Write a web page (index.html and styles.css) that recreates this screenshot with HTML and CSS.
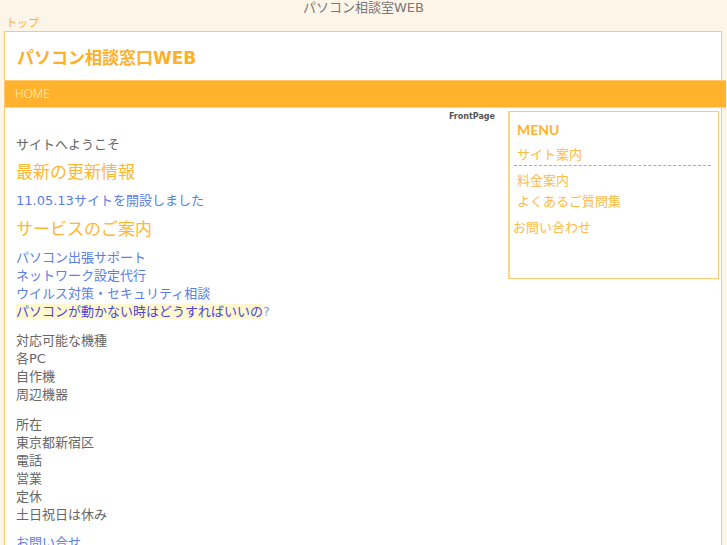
FILE: index.html
```html
<!DOCTYPE html>
<html lang="ja">
<head>
<meta charset="utf-8">
<title>パソコン相談室WEB</title>
<link rel="stylesheet" href="styles.css">
</head>
<body>
<div class="tagline">パソコン相談室WEB</div>
<div class="toplink"><a href="#">トップ</a></div>
<div class="wrap">
  <div class="header"><a href="#">パソコン相談窓口WEB</a></div>
  <div class="nav"><a href="#">HOME</a></div>
  <div class="main">
    <div class="content">
      <div class="pagename">FrontPage</div>
      <p class="text intro">サイトへようこそ</p>
      <h2 class="heading h-news">最新の更新情報</h2>
      <p class="news"><a href="#">11.05.13サイトを開設しました</a></p>
      <h2 class="heading h-service">サービスのご案内</h2>
      <ul class="links">
        <li><a href="#">パソコン出張サポート</a></li>
        <li><a href="#">ネットワーク設定代行</a></li>
        <li><a href="#">ウイルス対策・セキュリティ相談</a></li>
        <li><a href="#" class="visited">パソコンが動かない時はどうすればいいの</a>?</li>
      </ul>
      <ul class="text list-a">
        <li>対応可能な機種</li>
        <li>各PC</li>
        <li>自作機</li>
        <li>周辺機器</li>
      </ul>
      <ul class="text list-b">
        <li>所在</li>
        <li>東京都新宿区</li>
        <li>電話</li>
        <li>営業</li>
        <li>定休</li>
        <li>土日祝日は休み</li>
      </ul>
      <p class="more"><a href="#">お問い合せ</a></p>
    </div>
    <div class="sidebar">
      <h3 class="menu-title">MENU</h3>
      <ul class="menu">
        <li class="menu-first"><a href="#">サイト案内</a></li>
        <li><a href="#">料金案内</a></li>
        <li><a href="#">よくあるご質問集</a></li>
      </ul>
      <div class="menu-extra"><a href="#">お問い合わせ</a></div>
    </div>
  </div>
</div>
</body>
</html>
```
FILE: styles.css
```css
html, body {
  margin: 0;
  padding: 0;
}
body {
  background: #fef5e9;
  font-family: "DejaVu Sans", "Noto Sans CJK JP", sans-serif;
  font-size: 13px;
  color: #666;
  min-height: 545px;
}
a {
  text-decoration: none;
}
.tagline {
  text-align: center;
  font-size: 13px;
  line-height: 15px;
  height: 15px;
  color: #777;
}
.toplink {
  padding-left: 6px;
  font-size: 11px;
  line-height: 16px;
  height: 16px;
  padding-top: 1px;
  margin-bottom: -1px;
}
.toplink a {
  color: #ffae24;
}
.wrap {
  margin-left: 4px;
  width: 716px;
  border: 1px solid #ffc870;
  border-bottom: none;
  background: #fff;
  min-height: 513px;
}
.header {
  height: 48px;
  padding-left: 12px;
  display: flex;
  align-items: center;
  font-size: 17px;
  font-weight: bold;
}
.header a {
  color: #ffb02a;
}
.nav {
  height: 26px;
  margin-right: -5px;
  background: #ffb22d;
  border-top: 1px solid #ffc66a;
  border-bottom: 1px solid #ffd48e;
  padding-left: 10px;
  font-family: "Open Sans", "Noto Sans", sans-serif;
  font-weight: 300;
  font-size: 12px;
  line-height: 26px;
}
.nav a {
  color: #fff3dc;
}
.main {
  display: flex;
  padding-left: 11px;
  padding-right: 2px;
}
.content {
  flex: 1;
  padding-right: 13px;
}
.pagename {
  text-align: right;
  font-size: 8px;
  font-weight: bold;
  line-height: 10px;
  margin-top: 4px;
  color: #555;
}
.text, .news, .links, .more, .intro {
  margin: 0;
  padding: 0;
  list-style: none;
  line-height: 18px;
  font-size: 13px;
}
.intro {
  margin-top: 14px;
}
.heading {
  margin: 0;
  font-size: 17px;
  font-weight: normal;
  line-height: 24px;
  color: #ffb733;
}
.h-news {
  margin-top: 6px;
}
.news {
  margin-top: 8px;
}
.news a, .links a, .more a {
  color: #5a7ee6;
}
.h-service {
  margin-top: 7px;
}
.links {
  margin-top: 8px;
}
.links li {
  color: #8f9fd0;
}
.links a.visited {
  color: #4a45dd;
  background: #fff8cf;
}
.list-a {
  margin-top: 11px;
}
.list-b {
  margin-top: 12px;
}
.more {
  margin-top: 10px;
}
.sidebar {
  width: 201px;
  height: 157px;
  margin-top: 3px;
  border: 1px solid #ffc870;
  border-left: 2px solid #ffd58e;
  padding: 9px 7px 0 0;
}
.menu-title {
  margin: 0;
  padding-left: 7px;
  font-family: "Lato", "Noto Sans", sans-serif;
  font-weight: bold;
  font-size: 14px;
  line-height: 18px;
  color: #ffb22d;
}
.menu {
  margin: 7px 0 0 4px;
  padding: 0;
  list-style: none;
  font-size: 13px;
  line-height: 18px;
}
.menu li {
  padding-left: 3px;
  margin-bottom: 3px;
}
.menu .menu-first {
  border-bottom: 1px dashed #aaa;
  padding-bottom: 1px;
  margin-bottom: 6px;
}
.menu a, .menu-extra a {
  color: #ffbb44;
}
.menu-extra {
  margin-top: 8px;
  padding-left: 3px;
  font-size: 13px;
  line-height: 18px;
}
```
